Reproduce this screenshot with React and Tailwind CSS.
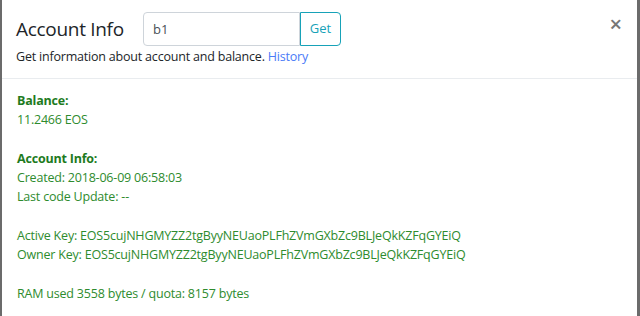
export default function App() {
  return (
    <div className="w-[640px] h-[316px] bg-[#6b6b6b] flex overflow-hidden" style={{ fontFamily: '"Open Sans", "Noto Sans", sans-serif' }}>
      <div className="ml-[2px] w-[635px] h-full bg-white flex flex-col">
        <div className="h-[79px] border-b border-[#e9ecef] flex items-start pl-[14px] pr-[15px] pt-[12px]">
          <div className="flex-1">
            <div className="flex items-center">
              <h5 className="text-[19px] tracking-[-0.3px] leading-[34px] text-[#212529] w-[127px]">Account Info</h5>
              <div className="flex h-[34px]">
                <input
                  className="w-[157px] h-[34px] border border-[#ced4da] rounded-l-[4px] px-[9px] text-[13px] text-[#495057] outline-none"
                  defaultValue="b1"
                />
                <button className="w-[41px] h-[34px] border border-[#17a2b8] rounded-r-[4px] text-[13px] text-[#17a2b8]">Get</button>
              </div>
            </div>
            <p className="text-[12.5px] tracking-[-0.2px] leading-[20px] text-[#212529] mt-[1px]">
              Get information about account and balance. <a className="text-[#4a7bf7]">History</a>
            </p>
          </div>
          <button className="text-[22px] font-semibold leading-[20px] text-[#777] mt-[1px]">×</button>
        </div>
        <div className="px-[15px] pt-[12px] text-[12.5px] tracking-[-0.2px] leading-[19.25px] text-[#2e8b2e]">
          <div className="font-bold text-[#1e7b1e]">Balance:</div>
          <div>11.2466 EOS</div>
          <div className="h-[19.25px]"></div>
          <div className="font-bold text-[#1e7b1e]">Account Info:</div>
          <div>Created: 2018-06-09 06:58:03</div>
          <div>Last code Update: --</div>
          <div className="h-[19.25px]"></div>
          <div>Active Key: EOS5cujNHGMYZZ2tgByyNEUaoPLFhZVmGXbZc9BLJeQkKZFqGYEiQ</div>
          <div>Owner Key: EOS5cujNHGMYZZ2tgByyNEUaoPLFhZVmGXbZc9BLJeQkKZFqGYEiQ</div>
          <div className="h-[19.25px]"></div>
          <div>RAM used 3558 bytes / quota: 8157 bytes</div>
        </div>
      </div>
    </div>
  );
}
